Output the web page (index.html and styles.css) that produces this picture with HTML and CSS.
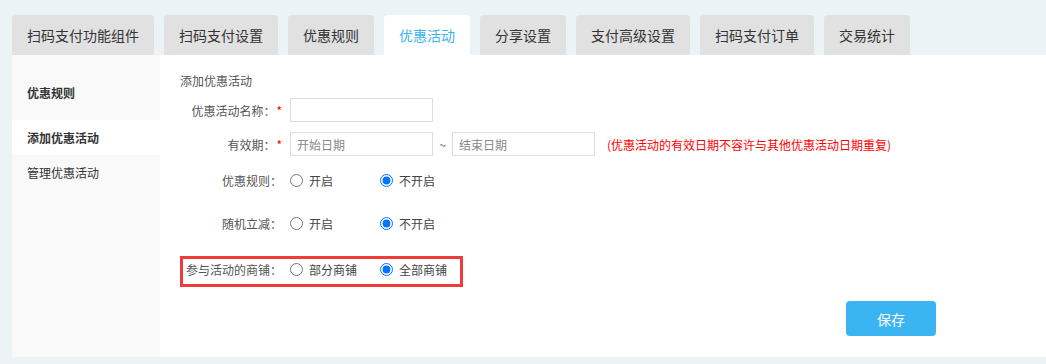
FILE: index.html
```html
<!DOCTYPE html>
<html lang="zh-CN">
<head>
    <meta charset="UTF-8">
    <meta name="viewport" content="width=device-width, initial-scale=1.0">
    <title>优惠活动</title>
    <link rel="stylesheet" href="styles.css">
</head>
<body>
    <div class="page">
        <ul class="tabs">
            <li class="tab">扫码支付功能组件</li>
            <li class="tab">扫码支付设置</li>
            <li class="tab">优惠规则</li>
            <li class="tab active">优惠活动</li>
            <li class="tab">分享设置</li>
            <li class="tab">支付高级设置</li>
            <li class="tab">扫码支付订单</li>
            <li class="tab">交易统计</li>
        </ul>
        <div class="panel">
            <div class="side">
                <div class="side-title">优惠规则</div>
                <div class="side-item active">添加优惠活动</div>
                <div class="side-item">管理优惠活动</div>
            </div>
            <div class="main">
                <div class="form-title">添加优惠活动</div>

                <div class="row row-name">
                    <label class="label">优惠活动名称：<span class="req">*</span></label>
                    <input class="text-input" type="text">
                </div>

                <div class="row row-date">
                    <label class="label">有效期：<span class="req">*</span></label>
                    <input class="text-input" type="text" placeholder="开始日期">
                    <span class="tilde">~</span>
                    <input class="text-input" type="text" placeholder="结束日期">
                    <span class="note">(优惠活动的有效日期不容许与其他优惠活动日期重复)</span>
                </div>

                <div class="row row-radio first">
                    <label class="label">优惠规则：</label>
                    <label class="option"><input type="radio" name="rule">开启</label>
                    <label class="option"><input type="radio" name="rule" checked>不开启</label>
                </div>

                <div class="row row-radio second">
                    <label class="label">随机立减：</label>
                    <label class="option"><input type="radio" name="random">开启</label>
                    <label class="option"><input type="radio" name="random" checked>不开启</label>
                </div>

                <div class="highlight">
                    <div class="row row-shop">
                        <label class="label">参与活动的商铺：</label>
                        <label class="option"><input type="radio" name="shop">部分商铺</label>
                        <label class="option"><input type="radio" name="shop" checked>全部商铺</label>
                    </div>
                </div>

                <div class="actions">
                    <button class="save-btn">保存</button>
                </div>
            </div>
        </div>
    </div>
</body>
</html>
```

FILE: styles.css
```css
body {
    margin: 0;
    background-color: #ebf3f7;
    font-family: "Microsoft YaHei", "Noto Sans CJK SC", sans-serif;
    font-size: 12px;
    color: #333;
}

.page {
    padding: 15px 0 0 12px;
}

.tabs {
    list-style: none;
    margin: 0;
    padding: 0;
    display: flex;
    gap: 10px;
}

.tab {
    height: 40px;
    line-height: 40px;
    padding: 0 15px;
    background-color: #e1e1e1;
    border-radius: 4px 4px 0 0;
    font-size: 14px;
    color: #333;
}

.tab.active {
    background-color: #fff;
    color: #3bb4f2;
}

.panel {
    display: flex;
    height: 302px;
}

.side {
    width: 148px;
    background-color: #f9f9f9;
}

.side-title {
    height: 65px;
    box-sizing: border-box;
    padding: 30px 0 0 15px;
    line-height: 16px;
    font-weight: bold;
    color: #333;
}

.side-item {
    height: 35px;
    line-height: 35px;
    padding-left: 15px;
    color: #333;
}

.side-item.active {
    background-color: #fff;
    font-weight: bold;
}

.main {
    flex: 1;
    background-color: #fff;
    padding-left: 20px;
}

.form-title {
    margin-top: 18px;
    line-height: 16px;
    color: #555;
}

.row {
    display: flex;
    align-items: center;
    height: 24px;
}

.row-name {
    margin-top: 9px;
}

.row-date {
    margin-top: 10px;
}

.row-radio.first {
    margin-top: 12px;
}

.row-radio.second {
    margin-top: 19px;
}

.label {
    flex-shrink: 0;
    width: 102px;
    margin-right: 8px;
    text-align: right;
    color: #555;
    white-space: nowrap;
}

.req {
    color: #f00;
    margin-left: 1px;
}

.text-input {
    width: 143px;
    height: 24px;
    box-sizing: border-box;
    border: 1px solid #ddd;
    padding: 0 6px;
    font-family: inherit;
    font-size: 12px;
    color: #333;
    outline: none;
}

.text-input::placeholder {
    color: #888;
}

.tilde {
    width: 19px;
    text-align: center;
    color: #666;
}

.note {
    margin-left: 12px;
    color: #f00;
}

.option {
    flex-shrink: 0;
    display: inline-flex;
    align-items: center;
    width: 90px;
    color: #444;
}

.option:last-child {
    width: auto;
}

.option input {
    margin: 0 6px 0 0;
    width: 13px;
    height: 13px;
}

.highlight {
    margin-top: 21px;
    width: 283px;
    box-sizing: border-box;
    border: 3px solid #f03b3b;
    padding-bottom: 5px;
}

.row-shop {
    height: 20px;
}

.row-shop .label {
    width: 99px;
}

.actions {
    margin-top: 14px;
    padding-left: 666px;
}

.save-btn {
    width: 90px;
    height: 35px;
    border: none;
    border-radius: 4px;
    background-color: #3bb4f2;
    color: #fff;
    font-family: inherit;
    font-size: 14px;
    cursor: pointer;
}
```
